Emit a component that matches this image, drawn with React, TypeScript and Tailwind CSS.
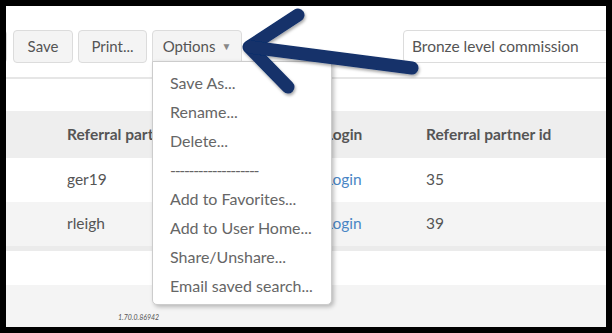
import React from 'react';

const menuItems = [
    'Save As...',
    'Rename...',
    'Delete...',
    '-------------------',
    'Add to Favorites...',
    'Add to User Home...',
    'Share/Unshare...',
    'Email saved search...',
];

const rows = [
    { user: 'ger19', id: '35', bg: 'bg-white' },
    { user: 'rleigh', id: '39', bg: 'bg-[#f4f4f4]' },
];

function ToolButton({ children, className = '' }: { children: React.ReactNode; className?: string }) {
    return (
        <button
            type="button"
            className={`h-[33px] shrink-0 rounded-[4px] border border-[#dcdcdc] bg-[#f4f4f4] text-[15px] text-[#555] ${className}`}
        >
            {children}
        </button>
    );
}

export default function App() {
    return (
        <div className="w-[612px] h-[333px] bg-black p-[6px]" style={{ fontFamily: 'Lato, "Open Sans", sans-serif' }}>
            <div className="relative w-[600px] h-[321px] bg-white overflow-hidden">
                {/* Toolbar */}
                <div className="flex items-center gap-[5px] pt-[24px] pb-[14px] border-b-2 border-[#e6e6e6]">
                    <ToolButton className="w-[40px] ml-[-39px]">&nbsp;</ToolButton>
                    <ToolButton className="w-[60px] ml-px">Save</ToolButton>
                    <ToolButton className="w-[69px]">Print...</ToolButton>
                    <ToolButton className="w-[90px] flex items-center justify-center gap-[6px] rounded-b-none">
                        Options
                        <span className="text-[10px] text-[#888]">▼</span>
                    </ToolButton>
                    <div className="ml-[156px] w-[230px] h-[33px] shrink-0 flex items-center rounded-l-[4px] border border-[#dcdcdc] pl-[8px] text-[15.5px] text-[#555]">
                        Bronze level commission
                    </div>
                </div>

                {/* Table */}
                <div className="mt-[32px]">
                    <div className="flex items-center h-[47px] bg-[#eeeeee] text-[15.5px] font-bold text-[#555]">
                        <div className="w-[319px] pl-[61px]">Referral partner</div>
                        <div className="w-[101px]">Login</div>
                        <div>Referral partner id</div>
                    </div>
                    {rows.map((r) => (
                        <div key={r.user} className={`flex items-center h-[44px] text-[15.5px] text-[#555] ${r.bg}`}>
                            <div className="w-[319px] pl-[61px]">{r.user}</div>
                            <div className="w-[101px] text-[#4a86c5]">Login</div>
                            <div>{r.id}</div>
                        </div>
                    ))}
                    <div className="h-[5px] bg-[#ebebeb]" />
                    <div className="h-[34px] bg-white" />
                    <div className="h-[43px] bg-[#f4f4f4] flex items-end pb-[6px] pl-[112px]">
                        <span className="text-[7px] italic text-[#555]">1.70.0.86942</span>
                    </div>
                </div>

                {/* Options menu */}
                <div className="absolute left-[146px] top-[55px] w-[180px] h-[244px] bg-white border border-[#cccccc] rounded-b-[5px] shadow-[2px_2px_4px_rgba(0,0,0,0.25)] pt-[6px]">
                    {menuItems.map((item) => (
                        <div
                            key={item}
                            className={`h-[29px] flex items-center pl-[17px] text-[16px] text-[#666] whitespace-nowrap ${item.startsWith('-') ? 'tracking-[-1.3px]' : ''}`}
                        >
                            {item}
                        </div>
                    ))}
                </div>

                {/* Arrow annotation */}
                <svg className="absolute left-[-6px] top-[-6px]" width="612" height="333" viewBox="0 0 612 333">
                    <defs>
                        <filter id="sh" x="-20%" y="-20%" width="140%" height="140%">
                            <feDropShadow dx="1" dy="2" stdDeviation="1.5" floodColor="#000" floodOpacity="0.35" />
                        </filter>
                    </defs>
                    <g
                        fill="none"
                        stroke="#12306b"
                        strokeWidth="13"
                        strokeLinecap="round"
                        strokeLinejoin="round"
                        filter="url(#sh)"
                    >
                        <path d="M298 15 L249 47 L288 87" />
                        <path d="M250 47 L412 68" />
                    </g>
                </svg>
            </div>
        </div>
    );
}
